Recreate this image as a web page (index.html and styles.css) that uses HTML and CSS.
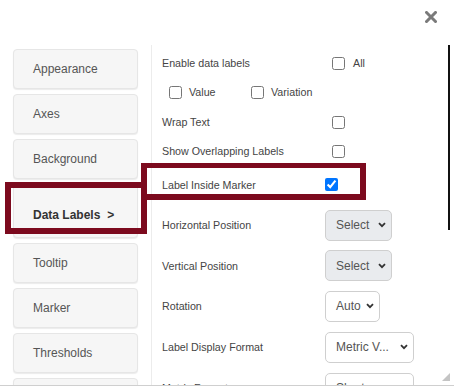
FILE: index.html
```html
<!DOCTYPE html>
<html>
<head>
<meta charset="utf-8">
<link rel="stylesheet" href="styles.css">
</head>
<body>
<div class="modal">
  <div class="header">
    <button class="close" aria-label="Close">
      <svg width="12" height="12" viewBox="0 0 12 12"><path d="M1.5 1.5 L10.5 10.5 M10.5 1.5 L1.5 10.5" stroke="#7a7a7a" stroke-width="3" stroke-linecap="square"/></svg>
    </button>
  </div>
  <div class="body">
    <nav class="sidebar">
      <div class="tab">Appearance</div>
      <div class="tab">Axes</div>
      <div class="tab">Background</div>
      <div class="tab active">Data Labels<span class="arrow">&gt;</span></div>
      <div class="tab">Tooltip</div>
      <div class="tab">Marker</div>
      <div class="tab">Thresholds</div>
      <div class="tab">Legend</div>
    </nav>
    <div class="pane">
      <div class="row r1">
        <span class="label">Enable data labels</span>
        <label class="opt off"><input type="checkbox"><span>All</span></label>
      </div>
      <div class="row r2">
        <label class="opt sub"><input type="checkbox"><span>Value</span></label>
        <label class="opt sub2"><input type="checkbox"><span>Variation</span></label>
      </div>
      <div class="row r3">
        <span class="label">Wrap Text</span>
        <input class="off" type="checkbox">
      </div>
      <div class="row r4">
        <span class="label">Show Overlapping Labels</span>
        <input class="off" type="checkbox">
      </div>
      <div class="row r5">
        <span class="label">Label Inside Marker</span>
        <input type="checkbox" checked>
      </div>
      <div class="row r6">
        <span class="label">Horizontal Position</span>
        <div class="select disabled w-sel"><span>Select</span><svg class="chev" width="8" height="6" viewBox="0 0 8 6"><path d="M1 1.2 L4 4.2 L7 1.2" fill="none" stroke="#333" stroke-width="1.8"/></svg></div>
      </div>
      <div class="row r7">
        <span class="label">Vertical Position</span>
        <div class="select disabled w-sel"><span>Select</span><svg class="chev" width="8" height="6" viewBox="0 0 8 6"><path d="M1 1.2 L4 4.2 L7 1.2" fill="none" stroke="#333" stroke-width="1.8"/></svg></div>
      </div>
      <div class="row r8">
        <span class="label">Rotation</span>
        <div class="select w-auto"><span>Auto</span><svg class="chev" width="8" height="6" viewBox="0 0 8 6"><path d="M1 1.2 L4 4.2 L7 1.2" fill="none" stroke="#333" stroke-width="1.8"/></svg></div>
      </div>
      <div class="row r9">
        <span class="label">Label Display Format</span>
        <div class="select w-wide"><span>Metric V...</span><svg class="chev" width="8" height="6" viewBox="0 0 8 6"><path d="M1 1.2 L4 4.2 L7 1.2" fill="none" stroke="#333" stroke-width="1.8"/></svg></div>
      </div>
      <div class="row r10">
        <span class="label">Metric Format</span>
        <div class="select w-wide"><span>Shorten...</span><svg class="chev" width="8" height="6" viewBox="0 0 8 6"><path d="M1 1.2 L4 4.2 L7 1.2" fill="none" stroke="#333" stroke-width="1.8"/></svg></div>
      </div>
    </div>
    <div class="scrollthumb"></div>
  </div>
  <svg class="grip" width="8" height="8" viewBox="0 0 8 8"><path d="M8 0 L8 8 L0 8 Z" fill="#c4c4c4"/></svg>
  <div class="hl hl-tab"></div>
  <div class="hl hl-row"></div>
</div>
</body>
</html>
```

FILE: styles.css
```css
* { box-sizing: border-box; }
html, body {
  margin: 0;
  padding: 0;
  background: #fff;
  font-family: "Liberation Sans", Arial, sans-serif;
}
.modal {
  position: relative;
  width: 454px;
  height: 392px;
  overflow: hidden;
}
.header {
  height: 45px;
  display: flex;
  justify-content: flex-end;
  align-items: flex-start;
  padding: 11px 17px 0 0;
}
.close {
  border: 0;
  background: none;
  padding: 0;
  width: 12px;
  height: 12px;
  display: block;
  cursor: pointer;
}
.close svg { display: block; }
.body {
  position: relative;
  display: flex;
  height: 341px;
  border-bottom: 1px solid #cfcfcf;
  overflow: hidden;
}
.sidebar {
  width: 152px;
  flex: none;
  border-right: 1px solid #ececec;
  padding: 4px 0 0 13px;
  display: flex;
  flex-direction: column;
  gap: 5px;
}
.tab {
  width: 125px;
  height: 40px;
  flex: none;
  background: #f6f6f6;
  border: 1px solid #e6e6e6;
  border-radius: 4px;
  box-shadow: 0 1px 1px rgba(0,0,0,0.08);
  font-size: 12px;
  color: #555;
  display: flex;
  align-items: center;
  padding-left: 19px;
}
.tab.active {
  height: 54px;
  align-items: flex-start;
  padding-top: 23px;
  font-weight: bold;
  color: #333;
}
.tab .arrow { margin-left: 7px; }
.pane {
  flex: 1;
  padding: 3px 0 0 10px;
  font-size: 10.7px;
  color: #444;
}
.row {
  display: flex;
  align-items: center;
}
.row .label { width: 163px; flex: none; }
.r1 { height: 30px; }
.r2 { height: 28px; }
.r3 { height: 32px; }
.r4 { height: 26px; }
.r5 { height: 41px; }
.r6 { height: 40px; }
.r7 { height: 41px; }
.r8 { height: 40px; }
.r9 { height: 42px; }
.r10 { height: 40px; }
input[type=checkbox] {
  width: 13px;
  height: 13px;
  margin: 0;
  flex: none;
}
.off { margin-left: 7px !important; }
.opt {
  display: flex;
  align-items: center;
  gap: 8px;
}
.opt.sub { margin-left: 7px; width: 82px; gap: 7px; }
.opt.sub2 { gap: 7px; }
.select {
  height: 31px;
  border: 1px solid #cfcfcf;
  border-radius: 5px;
  background: #fff;
  display: flex;
  align-items: center;
  justify-content: space-between;
  padding: 0 5px 0 10px;
  font-size: 12px;
  color: #555;
}
.select.disabled { background: #e9ebee; }
.chev { display: block; flex: none; }
.w-sel { width: 67px; }
.w-auto { width: 55px; }
.w-wide { width: 89px; }
.scrollthumb {
  position: absolute;
  right: 4px;
  top: -15px;
  width: 2px;
  height: 200px;
  background: #111;
}
.grip {
  position: absolute;
  left: 442px;
  top: 373px;
}
.hl {
  position: absolute;
  border: 6px solid #7c0a1e;
  pointer-events: none;
}
.hl-tab {
  left: 5px;
  top: 182px;
  width: 142px;
  height: 52px;
}
.hl-row {
  left: 141px;
  top: 163px;
  width: 225px;
  height: 37px;
  border-top-width: 5px;
}
```
